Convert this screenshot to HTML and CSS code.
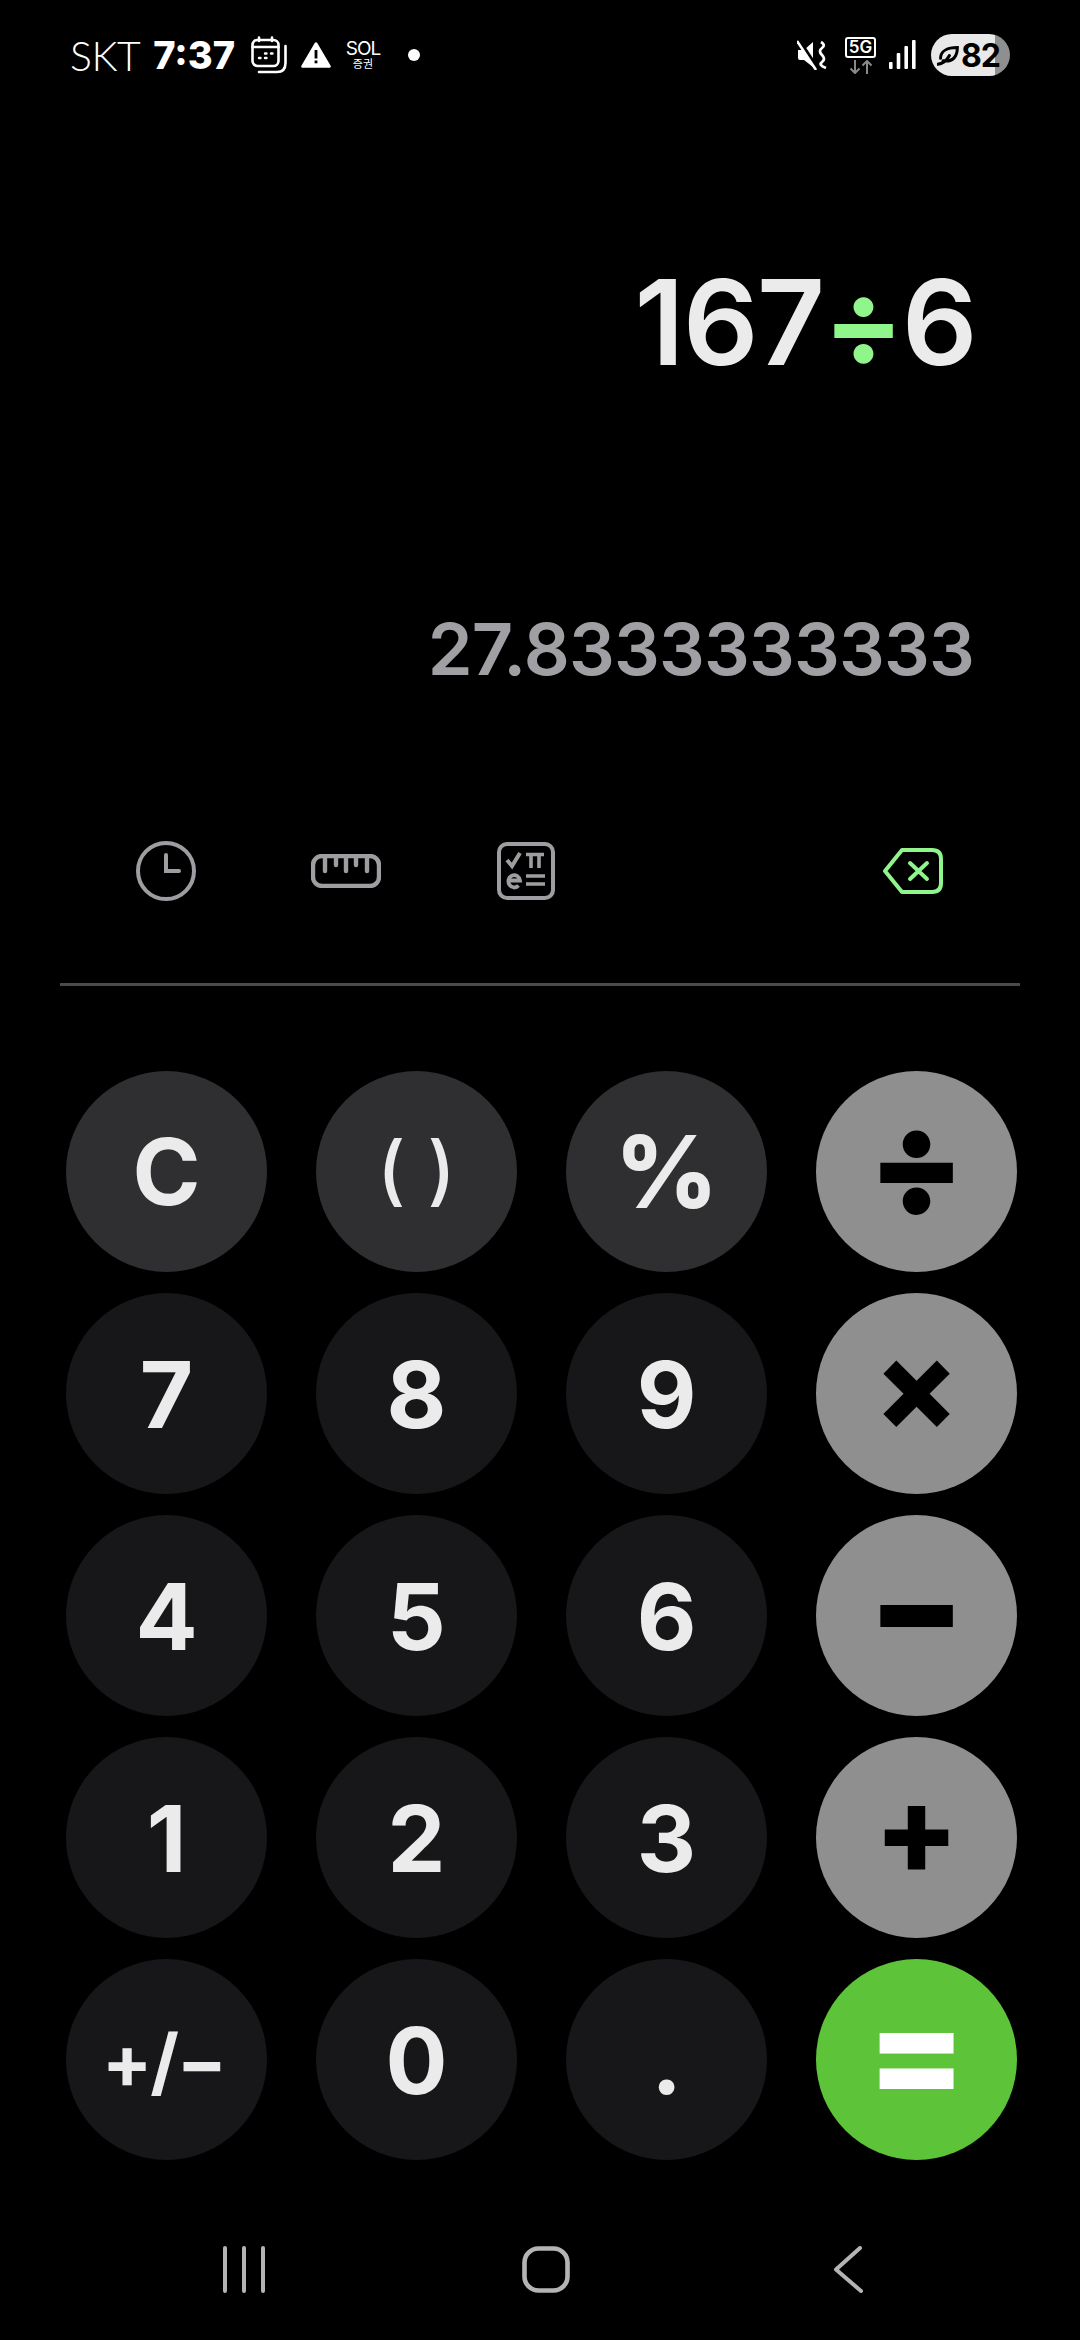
FILE: index.html
```html
<!DOCTYPE html>
<html lang="en">
    <head>
        <title>Calculator</title>
        <meta charset="utf-8" />
        <meta name="viewport" content="width=device-width, initial-scale=1.0" />
        <link rel="stylesheet" href="styles.css">
    </head>
    <body>
        <div id="status">
            <span class="carrier">SKT</span>
            <span class="clock">7:37</span>
            <svg class="calendar" width="36" height="38" viewBox="0 0 36 38" fill="none" stroke="white" stroke-width="2.6" stroke-linecap="round">
                <rect x="1.5" y="4" width="26" height="26" rx="5" />
                <path d="M1.5 11H27.5M8 1.5V5M21 1.5V5" />
                <path d="M34.5 10V27Q34.5 36 26 36H8" />
                <path d="M8 22H9.5M14 22H15.5M14 17.5H15.5M20 17.5H21.5" stroke-width="2.4" />
            </svg>
            <svg class="warning" width="30" height="26" viewBox="0 0 30 26">
                <path d="M15 1.5L28.5 24.5H1.5Z" fill="white" stroke="white" stroke-width="2.6" stroke-linejoin="round" />
                <rect x="13.6" y="8" width="2.8" height="8.5" fill="black" />
                <rect x="13.6" y="18.5" width="2.8" height="2.8" fill="black" />
            </svg>
            <span class="sol"><b>SOL</b><i>증권</i></span>
            <span class="dot"></span>
            <span class="status-right">
                <svg class="mute" width="30" height="30" viewBox="0 0 30 30" fill="white">
                    <path d="M1 10H7L16 2V27L7 20H3Q1 20 1 18Z" />
                    <path d="M2 0L21 29" stroke="black" stroke-width="3.4" />
                    <path d="M0 1L19 30" stroke="white" stroke-width="2.6" />
                    <path d="M24 2Q29 5 25 8T25 15T25 22T29 28" fill="none" stroke="white" stroke-width="2.8" />
                </svg>
                <span class="net">
                    <span class="fiveg">5G</span>
                    <svg width="24" height="14" viewBox="0 0 24 14" fill="none" stroke="#8a8a8a" stroke-width="2">
                        <path d="M6 0V13M1.5 8.5L6 13L10.5 8.5M18 14V1M13.5 5.5L18 1L22.5 5.5" />
                    </svg>
                </span>
                <svg class="signal" width="27" height="30" viewBox="0 0 27 30" fill="white">
                    <rect x="0" y="22" width="3.6" height="7" rx="1" />
                    <rect x="7.7" y="13" width="3.6" height="16" rx="1" />
                    <rect x="15.4" y="6" width="3.6" height="23" rx="1" />
                    <rect x="23" y="0" width="3.6" height="29" rx="1" />
                </svg>
                <span class="battery">
                    <svg width="23" height="23" viewBox="0 0 26 26" fill="none" stroke="black" stroke-width="3.4" stroke-linecap="round">
                        <path d="M4 16C4 8 12 4 23 4C23 14 18 21 7 19M1 23C6 22 11 19 14 13" />
                    </svg>
                    82
                </span>
            </span>
        </div>

        <div class="expression">167<span class="accent">÷</span>6</div>
        <div class="result">27.8333333333</div>

        <div class="tools">
            <span class="tool">
                <svg width="60" height="60" viewBox="0 0 60 60" fill="none" stroke="#9e9ea2" stroke-width="4">
                    <circle cx="30" cy="30" r="28" />
                    <path d="M30 14V30H43" stroke-linecap="round" />
                </svg>
            </span>
            <span class="tool">
                <svg width="70" height="34" viewBox="0 0 70 34" fill="none" stroke="#9e9ea2" stroke-width="4.4" stroke-linecap="round">
                    <rect x="2" y="2" width="66" height="30" rx="9" />
                    <path d="M14 3V17M25 3V11M35 3V17M45 3V11M56 3V17" />
                </svg>
            </span>
            <span class="tool">
                <svg width="58" height="58" viewBox="0 0 58 58" fill="none" stroke="#9e9ea2" stroke-width="4">
                    <rect x="2" y="2" width="54" height="54" rx="8" />
                    <path d="M10 18L15 24L23 11" stroke-width="4" />
                    <path d="M29 12.5H47M34 12V26M42 12V26" stroke-width="3.6" />
                    <path d="M12 38.5H23A5.8 6.2 0 1 0 21.5 43.5" stroke-width="3.8" />
                    <path d="M29 34H48M29 42H48" stroke-width="3.6" />
                </svg>
            </span>
            <span class="tool push">
                <svg width="60" height="46" viewBox="0 0 60 46" fill="none" stroke="#90f58a" stroke-width="4" stroke-linecap="round" stroke-linejoin="round">
                    <path d="M19 2H49Q58 2 58 11V35Q58 44 49 44H19L2 23Z" />
                    <path d="M27 15L44 31M44 15L27 31" />
                </svg>
            </span>
        </div>

        <div class="rule"></div>

        <div class="keypad">
            <span class="key fn">C</span>
            <span class="key fn parens">( )</span>
            <span class="key fn percent">%</span>
            <span class="key op wide">÷</span>
            <span class="key">7</span>
            <span class="key">8</span>
            <span class="key">9</span>
            <span class="key op">×</span>
            <span class="key">4</span>
            <span class="key">5</span>
            <span class="key">6</span>
            <span class="key op wide">−</span>
            <span class="key">1</span>
            <span class="key">2</span>
            <span class="key">3</span>
            <span class="key op">+</span>
            <span class="key sign">+/−</span>
            <span class="key">0</span>
            <span class="key">.</span>
            <span class="key equals">=</span>
        </div>

        <div class="nav">
            <svg width="44" height="47" viewBox="0 0 44 47" stroke="#b4b4b4" stroke-width="4" stroke-linecap="round">
                <path d="M3 2V45M22 2V45M41 2V45" />
            </svg>
            <svg width="48" height="47" viewBox="0 0 48 47" fill="none" stroke="#b4b4b4" stroke-width="4.6">
                <rect x="2.5" y="2.5" width="43" height="42" rx="14" />
            </svg>
            <svg width="30" height="47" viewBox="0 0 30 47" fill="none" stroke="#b4b4b4" stroke-width="4" stroke-linecap="round" stroke-linejoin="round">
                <path d="M27 2L3 23.5L28 45" />
            </svg>
        </div>
    </body>
</html>
```

FILE: styles.css
```css
html, body {
    margin: 0px;
    padding: 0px;
    background: black;
}
body {
    width: 1080px;
    height: 2340px;
    overflow: hidden;
    font-family: Inter, "Noto Sans CJK KR", sans-serif;
    color: #ebebeb;
}
#status {
    display: flex;
    align-items: center;
    padding: 0px 70px;
    height: 110px;
    color: white;
}
.carrier {
    font-family: Lato, sans-serif;
    font-size: 41px;
    font-weight: 300;
    letter-spacing: -0.5px;
}
.clock {
    margin-left: 13px;
    font-size: 38px;
    font-weight: 800;
}
.calendar {
    margin-left: 16px;
}
.warning {
    margin-left: 14px;
}
.sol {
    display: flex;
    flex-direction: column;
    align-items: center;
    margin-left: 17px;
    width: 30px;
}
.sol b {
    height: 19px;
    font-size: 19px;
    font-weight: 400;
    letter-spacing: -1px;
    line-height: 19px;
}
.sol i {
    height: 13px;
    font-size: 11px;
    font-style: normal;
    line-height: 13px;
}
.dot {
    margin-left: 30px;
    width: 12px;
    height: 12px;
    border-radius: 50%;
    background: white;
}
.status-right {
    display: flex;
    align-items: center;
    margin-left: auto;
}
.net {
    display: flex;
    flex-direction: column;
    align-items: center;
    margin: 0px 13px 0px 18px;
}
.fiveg {
    width: 31px;
    height: 21px;
    box-sizing: border-box;
    border: 2px solid white;
    border-radius: 3px;
    font-size: 17px;
    font-weight: 600;
    line-height: 17px;
    text-align: center;
    margin-bottom: 2px;
}
.battery {
    display: flex;
    align-items: center;
    gap: 1px;
    margin-left: 15px;
    padding-left: 6px;
    box-sizing: border-box;
    width: 79px;
    height: 42px;
    border-radius: 21px;
    background: linear-gradient(to right, #e9e9e9 64px, #8f8f8f 64px);
    color: black;
    font-size: 32px;
    font-weight: 700;
    letter-spacing: -1px;
}
.expression {
    margin-top: 142px;
    padding-right: 104px;
    height: 140px;
    font-size: 118px;
    font-weight: 600;
    letter-spacing: -1.5px;
    line-height: 140px;
    text-align: right;
}
.accent {
    color: #90f58a;
    font-weight: 700;
}
.result {
    margin-top: 220px;
    padding-right: 106px;
    height: 80px;
    color: #a0a0a4;
    font-size: 72px;
    font-weight: 600;
    letter-spacing: -0.8px;
    line-height: 74px;
    text-align: right;
}
.tools {
    display: flex;
    margin-top: 144px;
    padding: 0px 77px 0px 76px;
    height: 70px;
}
.tool {
    display: flex;
    align-items: center;
    justify-content: center;
    width: 180px;
}
.push {
    margin-left: auto;
}
.rule {
    margin: 77px 60px 0px;
    height: 3px;
    background: #4a4a4c;
}
.keypad {
    display: grid;
    grid-template-columns: repeat(4, 201px);
    grid-auto-rows: 201px;
    gap: 21px 49px;
    margin-top: 85px;
    padding-left: 66px;
}
.key {
    display: flex;
    align-items: center;
    justify-content: center;
    border-radius: 50%;
    background: #171719;
    font-size: 92px;
    font-weight: 700;
    line-height: 100px;
    padding-top: 3px;
    box-sizing: border-box;
}
.fn {
    background: #2f2f31;
    padding-top: 0px;
}
.parens {
    font-size: 76px;
    font-weight: 500;
    word-spacing: 2px;
    padding-bottom: 5px;
}
.percent {
    font-size: 100px;
    font-weight: 800;
}
.op {
    background: #8f8f8f;
    color: black;
    font-size: 124px;
    font-weight: 800;
    padding: 0px 0px 18px;
}
.wide {
    font-size: 138px;
    font-weight: 900;
}
.sign {
    font-size: 74px;
    letter-spacing: -2px;
    padding-right: 6px;
}
.equals {
    background: #5dc43a;
    color: white;
    font-size: 146px;
    font-weight: 800;
    padding: 0px 0px 18px;
}
.nav {
    display: grid;
    grid-template-columns: repeat(3, 302px);
    justify-items: center;
    margin-top: 86px;
    padding-left: 93px;
}
```
